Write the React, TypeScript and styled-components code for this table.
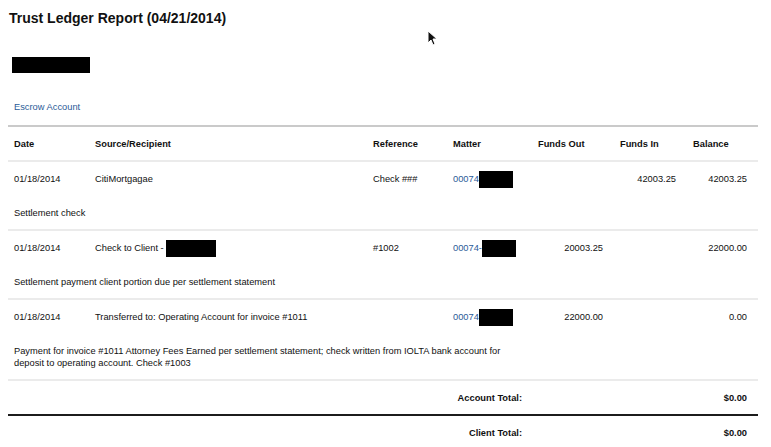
import React from 'react'
import styled, { createGlobalStyle } from 'styled-components'

const GlobalStyle = createGlobalStyle`
  body {
    margin: 8px;
    background: #ffffff;
    font-family: 'Liberation Sans', Arial, sans-serif;
    color: #111111;
  }
`

const columns = '81px 278px 80px 85px 82px 73px 71px'

type Entry = {
  date: string
  source: string
  sourceRedacted?: boolean
  reference: string
  matter: string
  fundsOut: string
  fundsIn: string
  balance: string
  note: string
}

const entries: Entry[] = [
  {
    date: '01/18/2014',
    source: 'CitiMortgagae',
    reference: 'Check ###',
    matter: '00074',
    fundsOut: '',
    fundsIn: '42003.25',
    balance: '42003.25',
    note: 'Settlement check',
  },
  {
    date: '01/18/2014',
    source: 'Check to Client -',
    sourceRedacted: true,
    reference: '#1002',
    matter: '00074-',
    fundsOut: '20003.25',
    fundsIn: '',
    balance: '22000.00',
    note: 'Settlement payment client portion due per settlement statement',
  },
  {
    date: '01/18/2014',
    source: 'Transferred to: Operating Account for invoice #1011',
    reference: '',
    matter: '00074',
    fundsOut: '22000.00',
    fundsIn: '',
    balance: '0.00',
    note: 'Payment for invoice #1011 Attorney Fees Earned per settlement statement; check written from IOLTA bank account for deposit to operating account. Check #1003',
  },
]

const Page = styled.div`
  position: relative;
  width: 750px;
`
const Title = styled.h1`
  margin: 0 0 0 1px;
  font-size: 14px;
  line-height: 20px;
  font-weight: 700;
  color: #111111;
`
const Redacted = styled.span<{ $w: number; $h?: number }>`
  display: inline-block;
  width: ${({ $w }) => $w}px;
  height: ${({ $h }) => $h ?? 17}px;
  background: #000000;
  vertical-align: middle;
`
const NameBlock = styled.div`
  margin: 29px 0 0 4px;
  height: 16px;
  display: flex;
`
const AccountLink = styled.div`
  margin: 27px 0 0 6px;
  font-size: 9.3px;
  line-height: 14px;
  color: #2b5b98;
`
const Ledger = styled.div`
  margin-top: 11px;
  border-top: 2px solid #cacaca;
`
const Row = styled.div<{ $h: number }>`
  display: grid;
  grid-template-columns: ${columns};
  height: ${({ $h }) => $h}px;
  align-items: center;
  font-size: 9.3px;
`
const HeaderRow = styled(Row)`
  font-weight: 700;
  border-bottom: 2px solid #ebebeb;
`
const Cell = styled.div<{ $right?: boolean }>`
  padding: 0 11px 0 6px;
  white-space: nowrap;
  display: flex;
  align-items: center;
  justify-content: ${({ $right }) => ($right ? 'flex-end' : 'flex-start')};
`
const MatterLink = styled.span`
  color: #2b5b98;
`
const Group = styled.div`
  border-bottom: 2px solid #ebebeb;
`
const Note = styled.div`
  padding: 10.5px 0 10.5px 6px;
  width: 510px;
  font-size: 9.3px;
  line-height: 12px;
`
const TotalRow = styled(Row)<{ $thick?: boolean }>`
  font-weight: 700;
  border-bottom: ${({ $thick }) => ($thick ? '2px solid #1c1c1c' : 'none')};
`
const TotalLabel = styled.div`
  grid-column: 1 / 5;
  text-align: right;
  padding-right: 10px;
`
const TotalValue = styled.div`
  grid-column: 7 / 8;
  text-align: right;
  padding-right: 11px;
`
const Cursor = styled.svg`
  position: absolute;
  left: 419px;
  top: 22px;
`

const App = () => (
  <Page>
    <GlobalStyle />
    <Title>Trust Ledger Report (04/21/2014)</Title>
    <NameBlock>
      <Redacted $w={78} $h={16} />
    </NameBlock>
    <AccountLink>Escrow Account</AccountLink>
    <Ledger>
      <HeaderRow $h={33}>
        <Cell>Date</Cell>
        <Cell>Source/Recipient</Cell>
        <Cell>Reference</Cell>
        <Cell>Matter</Cell>
        <Cell>Funds Out</Cell>
        <Cell>Funds In</Cell>
        <Cell>Balance</Cell>
      </HeaderRow>
      {entries.map((entry, i) => (
        <Group key={i}>
          <Row $h={34}>
            <Cell>{entry.date}</Cell>
            <Cell>
              {entry.source}
              {entry.sourceRedacted && <Redacted $w={50} style={{ marginLeft: 2 }} />}
            </Cell>
            <Cell>{entry.reference}</Cell>
            <Cell>
              <MatterLink>{entry.matter}</MatterLink>
              <Redacted $w={34} />
            </Cell>
            <Cell $right>{entry.fundsOut}</Cell>
            <Cell $right>{entry.fundsIn}</Cell>
            <Cell $right>{entry.balance}</Cell>
          </Row>
          <Note>{entry.note}</Note>
        </Group>
      ))}
      <TotalRow $h={33} $thick>
        <TotalLabel>Account Total:</TotalLabel>
        <TotalValue>$0.00</TotalValue>
      </TotalRow>
      <TotalRow $h={33}>
        <TotalLabel>Client Total:</TotalLabel>
        <TotalValue>$0.00</TotalValue>
      </TotalRow>
    </Ledger>
    <Cursor width="10" height="16" viewBox="0 0 10 16">
      <path d="M1 1 L1 13 L4 10 L6 15 L8 14 L6 9 L10 9 Z" fill="#111" stroke="#fff" strokeWidth="1" />
    </Cursor>
  </Page>
)

export default App
